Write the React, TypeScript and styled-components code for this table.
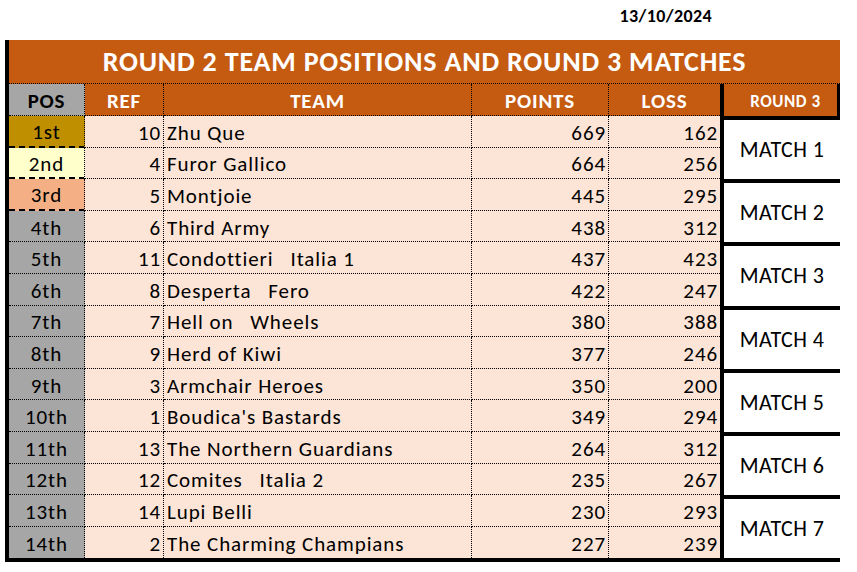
import React from "react";
import styled, { createGlobalStyle } from "styled-components";

const Global = createGlobalStyle`
  html, body { margin: 0; padding: 0; background: #ffffff; }
  body { font-family: Carlito, Calibri, Lato, "Liberation Sans", sans-serif; color: #000; }
`;

const FONT = `Carlito, Calibri, Lato, "Liberation Sans", sans-serif`;

const DateBar = styled.div`
  height: 40px;
  box-sizing: border-box;
  display: flex;
  justify-content: flex-end;
  align-items: flex-start;
  padding: 5px 145px 0 0;
  font-family: ${FONT};
  font-weight: 700;
  font-size: 18px;
  letter-spacing: 0.4px;
`;

const Sheet = styled.div`
  margin-left: 5px;
  width: 835px;
  box-sizing: border-box;
  border-left: 4px solid #000;
  border-bottom: 4px solid #000;
  display: grid;
  grid-template-columns: 76px 79px 308px 137px 111px 120px;
  grid-template-rows: 44px 32px repeat(14, 31.6px);
  font-family: ${FONT};
`;

const Title = styled.div`
  grid-column: 1 / -1;
  background: #c55a11;
  color: #ffffff;
  font-weight: 700;
  font-size: 28px;
  letter-spacing: 0.8px;
  display: flex;
  align-items: center;
  justify-content: center;
  border-bottom: 1px dotted #000;
  box-sizing: border-box;
`;

const HeadCell = styled.div<{ $pos?: boolean; $end?: boolean }>`
  background: ${(p) => (p.$pos ? "#a6a6a6" : "#c55a11")};
  color: ${(p) => (p.$pos ? "#000" : "#fff")};
  font-weight: 700;
  font-size: 21px;
  letter-spacing: 0.8px;
  display: flex;
  align-items: center;
  justify-content: center;
  padding-top: 2px;
  box-sizing: border-box;
  border-right: ${(p) => (p.$end ? "none" : "1px dotted #000")};
  border-bottom: 1px dotted #000;
`;

const RoundHead = styled.div`
  background: #c55a11;
  color: #fff;
  font-weight: 700;
  font-size: 17px;
  letter-spacing: 0.6px;
  display: flex;
  align-items: center;
  justify-content: center;
  padding: 2px 0 0 10px;
  box-sizing: border-box;
  border-left: 4px solid #000;
  border-right: 3px solid #000;
`;

type Align = "left" | "right" | "center";

const Cell = styled.div<{ $align: Align; $bg?: string; $dash?: boolean; $last?: boolean; $noRight?: boolean }>`
  background: ${(p) => p.$bg ?? "#fce4d6"};
  font-size: 21px;
  letter-spacing: 0.9px;
  display: flex;
  align-items: center;
  justify-content: ${(p) => (p.$align === "left" ? "flex-start" : p.$align === "right" ? "flex-end" : "center")};
  padding: 3px ${(p) => (p.$align === "right" ? "2px" : "3px")} 0 3px;
  box-sizing: border-box;
  white-space: pre;
  border-right: ${(p) => (p.$noRight ? "none" : "1px dotted #000")};
  border-bottom: ${(p) => (p.$last ? "none" : p.$dash ? "2px dashed #000" : "1px dotted #000")};
`;

const MatchCell = styled.div`
  grid-row: span 2;
  background: #ffffff;
  border-left: 4px solid #000;
  border-top: 4px solid #000;
  box-sizing: border-box;
  display: flex;
  align-items: center;
  justify-content: center;
  font-size: 22px;
  letter-spacing: 0.4px;
`;

const posBg: Record<string, string> = {
  "1st": "#bf8f00",
  "2nd": "#ffffcc",
  "3rd": "#f4b084",
};

const rows: [string, number, string, number, number][] = [
  ["1st", 10, "Zhu Que", 669, 162],
  ["2nd", 4, "Furor Gallico", 664, 256],
  ["3rd", 5, "Montjoie", 445, 295],
  ["4th", 6, "Third Army", 438, 312],
  ["5th", 11, "Condottieri   Italia 1", 437, 423],
  ["6th", 8, "Desperta   Fero", 422, 247],
  ["7th", 7, "Hell on   Wheels", 380, 388],
  ["8th", 9, "Herd of Kiwi", 377, 246],
  ["9th", 3, "Armchair Heroes", 350, 200],
  ["10th", 1, "Boudica's Bastards", 349, 294],
  ["11th", 13, "The Northern Guardians", 264, 312],
  ["12th", 12, "Comites   Italia 2", 235, 267],
  ["13th", 14, "Lupi Belli", 230, 293],
  ["14th", 2, "The Charming Champians", 227, 239],
];

export default function App() {
  return (
    <>
      <Global />
      <DateBar>13/10/2024</DateBar>
      <Sheet>
        <Title>ROUND 2 TEAM POSITIONS AND ROUND 3 MATCHES</Title>
        <HeadCell $pos>POS</HeadCell>
        <HeadCell>REF</HeadCell>
        <HeadCell>TEAM</HeadCell>
        <HeadCell>POINTS</HeadCell>
        <HeadCell $end>LOSS</HeadCell>
        <RoundHead>ROUND 3</RoundHead>
        {rows.map(([pos, ref, team, pts, loss], i) => {
          const last = i === rows.length - 1;
          return (
            <React.Fragment key={pos}>
              <Cell $align="center" $bg={posBg[pos] ?? "#a6a6a6"} $dash={i < 3} $last={last}>
                {pos}
              </Cell>
              <Cell $align="right" $last={last}>{ref}</Cell>
              <Cell $align="left" $last={last}>{team}</Cell>
              <Cell $align="right" $last={last}>{pts}</Cell>
              <Cell $align="right" $last={last} $noRight>{loss}</Cell>
              {i % 2 === 0 && <MatchCell>MATCH {i / 2 + 1}</MatchCell>}
            </React.Fragment>
          );
        })}
      </Sheet>
    </>
  );
}
